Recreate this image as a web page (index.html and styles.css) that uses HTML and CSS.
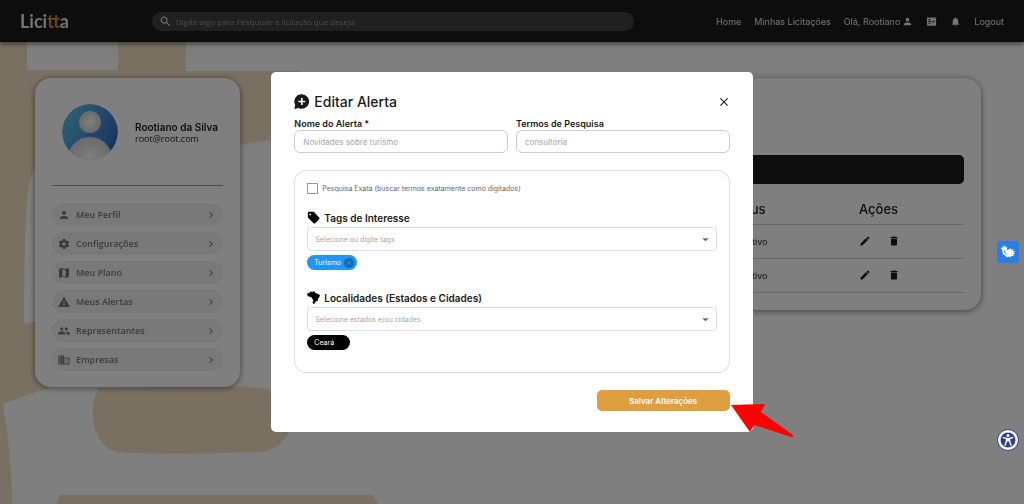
FILE: index.html
```html
<!DOCTYPE html>
<html lang="pt-BR">
<head>
  <meta charset="UTF-8">
  <meta name="viewport" content="width=device-width, initial-scale=1.0">
  <title>Licitta - Meus Alertas</title>
  <link rel="stylesheet" href="styles.css">
</head>
<body>
  <!-- icons used more than once -->
  <svg class="sprite" aria-hidden="true">
    <symbol id="i-person" viewBox="0 0 24 24"><path d="M12 12a4 4 0 1 0 0-8 4 4 0 0 0 0 8zm0 2c-2.700 0-8 1.300-8 4v2h16v-2c0-2.700-5.300-4-8-4z"/></symbol>
    <symbol id="i-chevron" viewBox="0 0 24 24"><path d="M10 6 8.600 7.400 13.200 12l-4.600 4.600L10 18l6-6z"/></symbol>
    <symbol id="i-edit" viewBox="0 0 24 24"><path d="M3 17.250V21h3.750L17.800 9.900l-3.700-3.700L3 17.250zM20.700 7c.4-.4.4-1 0-1.400l-2.300-2.300a1 1 0 0 0-1.400 0l-1.800 1.800 3.700 3.700L20.700 7z"/></symbol>
    <symbol id="i-delete" viewBox="0 0 24 24"><path d="M6 19c0 1.100.9 2 2 2h8c1.100 0 2-.9 2-2V7H6v12zM19 4h-3.500l-1-1h-5l-1 1H5v2h14V4z"/></symbol>
    <symbol id="i-arrow" viewBox="0 0 24 24"><path d="M5 9l7 7 7-7z"/></symbol>
  </svg>

  <svg class="backdrop-art" viewBox="0 0 1024 504" preserveAspectRatio="xMinYMin slice" aria-hidden="true">
    <path class="art-sand" d="M0 0H27V70H118V0H186V71H300V139C262 140 246 142 220 152L60 150C38 158 30 170 27 200Q24 245 24 324L50 318V388Q28 394 3 404Q12 455 12 504H0z"/>
    <path class="art-sand" d="M99 388C90 405 92 425 97 434C104 450 115 452 128 453Q190 455 258 452C278 451 285 440 290 430V393Q262 387 230 386z"/>
    <path class="art-sand" d="M60 495H373L378 504H56z"/>
  </svg>

  <header class="navbar">
    <a class="logo" href="#" aria-label="Licitta">
      <span>Lici</span><span class="logo-tt">tt</span><span>a</span>
    </a>
    <label class="search">
      <svg viewBox="0 0 24 24"><path d="M15.500 14h-.8l-.3-.3A6.500 6.500 0 1 0 13.700 14.400l.3.3v.8l5 5 1.500-1.500-5-5zm-6 0a4.500 4.500 0 1 1 0-9 4.500 4.500 0 0 1 0 9z"/></svg>
      <input type="text" aria-label="Pesquisar" placeholder="Digite algo para Pesquisar a licitação que deseja">
    </label>
    <nav class="nav-links">
      <a href="#">Home</a>
      <a href="#">Minhas Licitações</a>
      <a href="#">Olá, Rootiano <svg><use href="#i-person"/></svg></a>
      <a href="#" aria-label="Notícias"><svg viewBox="0 0 24 24"><path fill-rule="evenodd" d="M4 3h16a2 2 0 0 1 2 2v14a2 2 0 0 1-2 2H4a2 2 0 0 1-2-2V5c0-1.100.9-2 2-2zm1 4v2h5V7zm0 4v2h5v-2zm0 4v2h5v-2zm9.800.200L19.600 10.400 18.200 9l-3.400 3.400-1.400-1.400L12 12.400z"/></svg></a>
      <a href="#" aria-label="Notificações"><svg viewBox="0 0 24 24"><path d="M12 22a2 2 0 0 0 2-2h-4c0 1.100.9 2 2 2zm6-6v-5c0-3-1.600-5.600-4.500-6.300V4a1.500 1.500 0 0 0-3 0v.7C7.600 5.400 6 7.900 6 11v5l-2 2v1h16v-1z"/></svg></a>
      <a href="#">Logout</a>
    </nav>
  </header>

  <main class="content">
    <aside class="card sidebar">
      <div class="profile">
        <svg class="avatar" viewBox="0 0 56 56" role="img" aria-label="Foto de perfil">
          <defs>
            <linearGradient id="avatarBg" x1="0" y1="0.200" x2="1" y2="0.800">
              <stop offset="0" stop-color="#5cc4e6"/>
              <stop offset="1" stop-color="#2f62c4"/>
            </linearGradient>
            <radialGradient id="avatarFg">
              <stop offset="0" stop-color="#fff"/>
              <stop offset="1" stop-color="#d4d4d8"/>
            </radialGradient>
            <clipPath id="avatarClip"><circle cx="28" cy="28" r="28"/></clipPath>
          </defs>
          <g clip-path="url(#avatarClip)">
            <circle cx="28" cy="28" r="28" fill="url(#avatarBg)"/>
            <circle cx="28" cy="18" r="11" fill="url(#avatarFg)"/>
            <ellipse cx="28" cy="54" rx="22" ry="21" fill="url(#avatarFg)"/>
          </g>
        </svg>
        <div>
          <h2 class="profile-name">Rootiano da Silva</h2>
          <p class="profile-email">root@root.com</p>
        </div>
      </div>
      <hr class="divider">
      <nav class="menu">
        <a class="menu-item" href="#"><svg><use href="#i-person"/></svg><span>Meu Perfil</span><svg class="chevron"><use href="#i-chevron"/></svg></a>
        <a class="menu-item" href="#"><svg viewBox="0 0 24 24"><path fill-rule="evenodd" d="M9.500 2h5l.5 3 2 1.200 2.900-1.100 2.400 4.200L20 11v2l2.300 1.800-2.400 4.200-2.900-1.200-2 1.200-.5 3h-5L9 19l-2-1.200L4.100 19l-2.400-4.200L4 13v-2L1.700 9.300l2.400-4.200L7 6.200 9 5zM12 8.500a3.500 3.500 0 1 0 0 7 3.500 3.500 0 0 0 0-7z"/></svg><span>Configurações</span><svg class="chevron"><use href="#i-chevron"/></svg></a>
        <a class="menu-item" href="#"><svg viewBox="0 0 24 24"><path fill-rule="evenodd" d="M2 4l6-2 7 2 7-2v18l-6 2-7-2-7 2zm7 .500v13.500l6 2V6.500z"/></svg><span>Meu Plano</span><svg class="chevron"><use href="#i-chevron"/></svg></a>
        <a class="menu-item" href="#"><svg viewBox="0 0 24 24"><path fill-rule="evenodd" d="M0 22h24L12 1zm13.200-3h-2.400v-2.400h2.400zm0-4.500h-2.400V10h2.400z"/></svg><span>Meus Alertas</span><svg class="chevron"><use href="#i-chevron"/></svg></a>
        <a class="menu-item" href="#"><svg viewBox="0 0 24 24"><path d="M16.500 11a3.200 3.200 0 1 0 0-6.400 3.200 3.200 0 0 0 0 6.400zm-9 0a3.200 3.200 0 1 0 0-6.400 3.200 3.200 0 0 0 0 6.400zm0 2C5 13 0 14.200 0 16.600V19h15v-2.400C15 14.200 10 13 7.500 13zm9 0-1 .1c1.200.8 2 2 2 3.500V19H24v-2.400c0-2.400-5-3.600-7.500-3.600z"/></svg><span>Representantes</span><svg class="chevron"><use href="#i-chevron"/></svg></a>
        <a class="menu-item" href="#"><svg viewBox="0 0 24 24"><path fill-rule="evenodd" d="M12 7V3H1v18h22V7zM6 19H3v-2h3zm0-4H3v-2h3zm0-4H3V9h3zm0-4H3V5h3zm4 12H8v-2h2zm0-4H8v-2h2zm0-4H8V9h2zm0-4H8V5h2zm11 12h-9v-2h2v-2h-2v-2h2v-2h-2V9h9zm-2-8h-2v2h2zm0 4h-2v2h2z"/></svg><span>Empresas</span><svg class="chevron"><use href="#i-chevron"/></svg></a>
      </nav>
    </aside>

    <section class="card alerts">
      <div class="alerts-bar"></div>
      <table class="alerts-table">
        <thead>
          <tr><th></th><th>Status</th><th>Ações</th></tr>
        </thead>
        <tbody>
          <tr>
            <td></td>
            <td><span class="status">Ativo</span></td>
            <td>
              <button class="icon-btn" aria-label="Editar"><svg><use href="#i-edit"/></svg></button>
              <button class="icon-btn" aria-label="Excluir"><svg><use href="#i-delete"/></svg></button>
            </td>
          </tr>
          <tr>
            <td></td>
            <td><span class="status">Ativo</span></td>
            <td>
              <button class="icon-btn" aria-label="Editar"><svg><use href="#i-edit"/></svg></button>
              <button class="icon-btn" aria-label="Excluir"><svg><use href="#i-delete"/></svg></button>
            </td>
          </tr>
        </tbody>
      </table>
    </section>
  </main>

  <div class="overlay">
    <form class="modal" role="dialog" aria-labelledby="modalTitle">
      <div class="modal-header">
        <svg viewBox="0 0 24 24"><path fill-rule="evenodd" d="M12.500 0.500a11.500 11.500 0 1 1-5.200 21.700L0.500 24l1.400-6.500A11.500 11.500 0 0 1 12.500 0.500zm-1.300 6v4.200H7v2.600h4.200v4.200h2.600v-4.200H18v-2.600h-4.200V6.500z"/></svg>
        <h1 id="modalTitle">Editar Alerta</h1>
        <button type="button" class="close" aria-label="Fechar">
          <svg viewBox="0 0 24 24"><path d="M20 5.500 18.500 4 12 10.500 5.500 4 4 5.500 10.500 12 4 18.500 5.500 20 12 13.500l6.500 6.500 1.500-1.500L13.500 12z"/></svg>
        </button>
      </div>

      <div class="fields">
        <div class="field">
          <label for="nome">Nome do Alerta *</label>
          <input type="text" id="nome" placeholder="Novidades sobre turismo">
        </div>
        <div class="field">
          <label for="termos">Termos de Pesquisa</label>
          <input type="text" id="termos" placeholder="consultoria">
        </div>
      </div>

      <div class="filters">
        <label class="check">
          <input type="checkbox">
          Pesquisa Exata (buscar termos exatamente como digitados)
        </label>

        <div class="filter">
          <label class="filter-title" for="tags">
            <svg viewBox="0 0 24 24"><path fill-rule="evenodd" d="M3.500 1.500h9L22.500 12a2.500 2.500 0 0 1 0 3L15 22.500a2.500 2.500 0 0 1-3 0L1.500 12V3.500a2 2 0 0 1 2-2zM6 4.500A1.700 1.700 0 1 0 6 8a1.700 1.700 0 0 0 0-3.500z"/></svg>
            Tags de Interesse
          </label>
          <div class="combo">
            <input type="text" id="tags" placeholder="Selecione ou digite tags">
            <svg><use href="#i-arrow"/></svg>
          </div>
          <div class="chip chip-blue">Turismo
            <button type="button" aria-label="Remover Turismo"><svg viewBox="0 0 10 10"><path d="M3 3l4 4M7 3l-4 4"/></svg></button>
          </div>
        </div>

        <div class="filter">
          <label class="filter-title" for="locais">
            <svg viewBox="0 0 24 24"><path d="M1 4 5 3 6 1l4 1 3-2 2 3 4 2 5 2.500L22.500 12l-2 2-.5 4-4 1.500L14 23l-2 1-2-3 2-2.500-2-4L7.500 11 3 10 0 7.500z"/></svg>
            Localidades (Estados e Cidades)
          </label>
          <div class="combo">
            <input type="text" id="locais" placeholder="Selecione estados e/ou cidades">
            <svg><use href="#i-arrow"/></svg>
          </div>
          <div class="chip chip-black">Ceará
            <button type="button" aria-label="Remover Ceará"></button>
          </div>
        </div>
      </div>

      <div class="modal-footer">
        <div class="save-wrap">
          <button type="submit" class="save">Salvar Alterações</button>
          <svg class="pointer" viewBox="0 0 64 34" aria-hidden="true"><path d="M1 1 35 0 31 8 63 31Q64 33 61 33L24 21 20 28z"/></svg>
        </div>
      </div>
    </form>
  </div>

  <button class="float-btn libras" aria-label="Libras">
    <svg viewBox="0 0 24 24"><path d="M6 11 4 7l2 1V5l2 2V4l2 3 1-1 0 4 2-1 2-1 0 1.500 3-.5-1 1.500 3 .5-2 1.500 2 1.500-2.500.5 1 2-3-.5-1 2-2-1-2 1-1-2-3-1.500z"/><path class="libras-gap" d="M8.500 9.500 8 12l3 3"/></svg>
  </button>
  <button class="float-btn access" aria-label="Acessibilidade">
    <svg viewBox="0 0 24 24"><circle cx="12" cy="12" r="11"/><circle class="access-dot" cx="12" cy="6" r="2"/><path d="M5 8.500l5 1.500v3l-2 6.500 M19 8.500l-5 1.500v3l2 6.500 M12 9v5"/></svg>
  </button>
</body>
</html>
```
FILE: styles.css
```css
* {
  margin: 0;
  padding: 0;
  box-sizing: border-box;
}

body {
  min-height: 100vh;
  background: #fff;
  color: #1a1a1a;
  font-family: Inter, "Open Sans", sans-serif;
  font-size: 9px;
  overflow-x: hidden;
}

a {
  color: inherit;
  text-decoration: none;
}

button,
input {
  font: inherit;
  color: inherit;
}

button {
  border: none;
  background: none;
  cursor: pointer;
}

svg {
  fill: currentColor;
  flex-shrink: 0;
}

.sprite {
  display: none;
}

.backdrop-art {
  position: fixed;
  inset: 0;
  width: 100%;
  height: 100%;
  z-index: -1;
}

.art-sand {
  fill: #f5e1c4;
}

/* navbar */
.navbar {
  position: relative;
  display: flex;
  align-items: center;
  height: 42px;
  padding: 0 20px;
  background: #1a1a1a;
  color: #e6e6e6;
  box-shadow: 0 2px 5px rgba(0, 0, 0, 0.5);
}

.logo {
  width: 132px;
  font-family: Lato, sans-serif;
  font-size: 18px;
  font-weight: 700;
  line-height: 24px;
}

.logo-tt {
  color: #d98f2b;
}

.search {
  display: flex;
  flex-shrink: 0;
  align-items: center;
  gap: 4px;
  width: 49%;
  height: 19px;
  padding: 0 7px;
  border-radius: 10px;
  background: #404040;
}

.search svg {
  width: 13px;
  height: 13px;
}

.search input {
  flex: 1;
  border: none;
  outline: none;
  background: none;
  font-family: "Open Sans", sans-serif;
  font-size: 8px;
}

.search input::placeholder {
  color: #999;
}

.nav-links {
  display: flex;
  align-items: center;
  gap: 13px;
  margin-left: auto;
  white-space: nowrap;
}

.nav-links a {
  display: flex;
  align-items: center;
  gap: 2px;
}

.nav-links svg {
  width: 11px;
  height: 11px;
}

/* page */
.content {
  display: flex;
  align-items: flex-start;
  gap: 48px;
  padding: 36px 43px 0 35px;
}

.card {
  border-radius: 16px;
  background: #fff;
  box-shadow: 0 1px 6px rgba(0, 0, 0, 0.5);
}

.sidebar {
  width: 205px;
  padding: 26px 17px 16px;
}

.profile {
  display: flex;
  align-items: center;
  gap: 17px;
  padding-left: 10px;
  white-space: nowrap;
}

.avatar {
  width: 56px;
  height: 56px;
}

.profile-name {
  font-size: 10px;
  font-weight: 600;
  line-height: 12px;
}

.profile-email {
  font-family: "Open Sans", sans-serif;
  line-height: 11px;
}

.divider {
  height: 1px;
  margin: 25px 0 17px;
  border: none;
  background: #999;
}

.menu {
  display: flex;
  flex-direction: column;
  gap: 6px;
  font-family: "Open Sans", sans-serif;
}

.menu-item {
  display: flex;
  align-items: center;
  gap: 6px;
  height: 23px;
  padding: 0 6px;
  border-radius: 12px;
  background: #f2f2f2;
  color: #777;
  font-weight: 600;
}

.menu-item svg {
  width: 12px;
  height: 12px;
}

.menu-item .chevron {
  margin-left: auto;
}

.alerts {
  flex: 1;
  padding: 77px 17px 17px;
}

.alerts-bar {
  height: 29px;
  border-radius: 5px;
  background: #1a1a1a;
}

.alerts-table {
  width: 100%;
  margin-top: 10px;
  border-collapse: collapse;
  table-layout: fixed;
}

.alerts-table th {
  height: 30px;
  border-bottom: 1px solid #ccc;
  font-size: 13px;
  font-weight: 500;
  text-align: left;
}

.alerts-table th:nth-child(2) {
  width: 133px;
}

.alerts-table th:nth-child(3) {
  width: 105px;
}

.alerts-table td {
  height: 34px;
  border-bottom: 1px solid #ccc;
}

.status {
  padding-left: 20px;
}

.icon-btn {
  margin-right: 14px;
  vertical-align: middle;
}

.icon-btn svg {
  display: block;
  width: 12px;
  height: 12px;
}

/* modal */
.overlay {
  position: fixed;
  inset: 0;
  display: flex;
  align-items: center;
  justify-content: center;
  background: rgba(0, 0, 0, 0.5);
}

.modal {
  width: 47%;
  padding: 21px 23px;
  border-radius: 5px;
  background: #fff;
}

.modal-header {
  display: flex;
  align-items: center;
  gap: 5px;
  height: 17px;
}

.modal-header svg {
  width: 15px;
  height: 15px;
}

.modal-header h1 {
  font-size: 14px;
  font-weight: 500;
}

.close {
  margin-left: auto;
}

.modal-header .close svg {
  display: block;
  width: 12px;
  height: 12px;
}

.fields {
  display: grid;
  grid-template-columns: 1fr 1fr;
  gap: 8px;
  margin-top: 8px;
}

.field label {
  display: block;
  font-weight: 600;
  line-height: 12px;
}

.field input {
  width: 100%;
  height: 23px;
  padding: 0 8px;
  border: 1px solid #ccc;
  border-radius: 6px;
  outline: none;
  font-size: 8px;
}

.modal ::placeholder {
  color: #a6a6a6;
}

.filters {
  margin-top: 17px;
  padding: 12px 12px 22px;
  border: 1px solid #ddd;
  border-radius: 12px;
}

.check {
  display: flex;
  align-items: center;
  gap: 4px;
  color: #666;
  font-size: 7px;
}

.check input {
  appearance: none;
  width: 11px;
  height: 11px;
  border: 1px solid #999;
  background: #fff;
}

.filter {
  margin-top: 14px;
}

.filter + .filter {
  margin-top: 18px;
}

.filter-title {
  display: flex;
  align-items: center;
  gap: 4px;
  height: 19px;
  font-size: 10px;
  font-weight: 600;
}

.filter-title svg {
  width: 13px;
  height: 13px;
  color: #000;
}

.combo {
  display: flex;
  align-items: center;
  height: 24px;
  padding: 0 5px 0 7px;
  border: 1px solid #ddd;
  border-radius: 4px;
}

.combo input {
  flex: 1;
  border: none;
  outline: none;
  background: none;
  font-size: 7px;
}

.combo svg {
  width: 11px;
  height: 11px;
  color: #666;
}

.chip {
  display: flex;
  align-items: center;
  gap: 3px;
  width: fit-content;
  height: 15px;
  margin-top: 4px;
  padding: 0 3px 0 7px;
  border-radius: 8px;
  color: #fff;
  font-size: 7px;
}

.chip button {
  width: 10px;
  height: 10px;
  border-radius: 50%;
}

.chip svg {
  display: block;
  stroke: #2196f3;
}

.chip-blue {
  background: #2196f3;
}

.chip-blue button {
  background: #1769aa;
}

.chip-black {
  background: #000;
}

.modal-footer {
  display: flex;
  justify-content: flex-end;
  margin-top: 17px;
}

.save-wrap {
  position: relative;
  width: 133px;
}

.save {
  display: block;
  width: 100%;
  height: 21px;
  border-radius: 5px;
  background: #e09f3e;
  color: #fff;
  font-size: 8px;
  font-weight: 600;
}

.pointer {
  position: absolute;
  top: 14px;
  left: 100%;
  width: 64px;
  height: 34px;
  fill: #f00;
}

/* floating accessibility buttons */
.float-btn {
  position: fixed;
  right: 5px;
  width: 22px;
  height: 22px;
  color: #fff;
}

.float-btn svg {
  display: block;
  width: 100%;
  height: 100%;
}

.libras {
  top: 50%;
  border-radius: 4px;
  background: #2a7de8;
  transform: translateY(-50%);
}

.libras-gap {
  fill: none;
  stroke: #2a7de8;
}

.access {
  bottom: 53px;
  padding: 1px;
  border-radius: 50%;
  border: 1px solid #2c3c94;
  background: #fff;
}

.access svg {
  fill: #2c3c94;
  stroke: #fff;
  stroke-width: 2;
}

.access-dot {
  fill: #fff;
  stroke: none;
}
```
